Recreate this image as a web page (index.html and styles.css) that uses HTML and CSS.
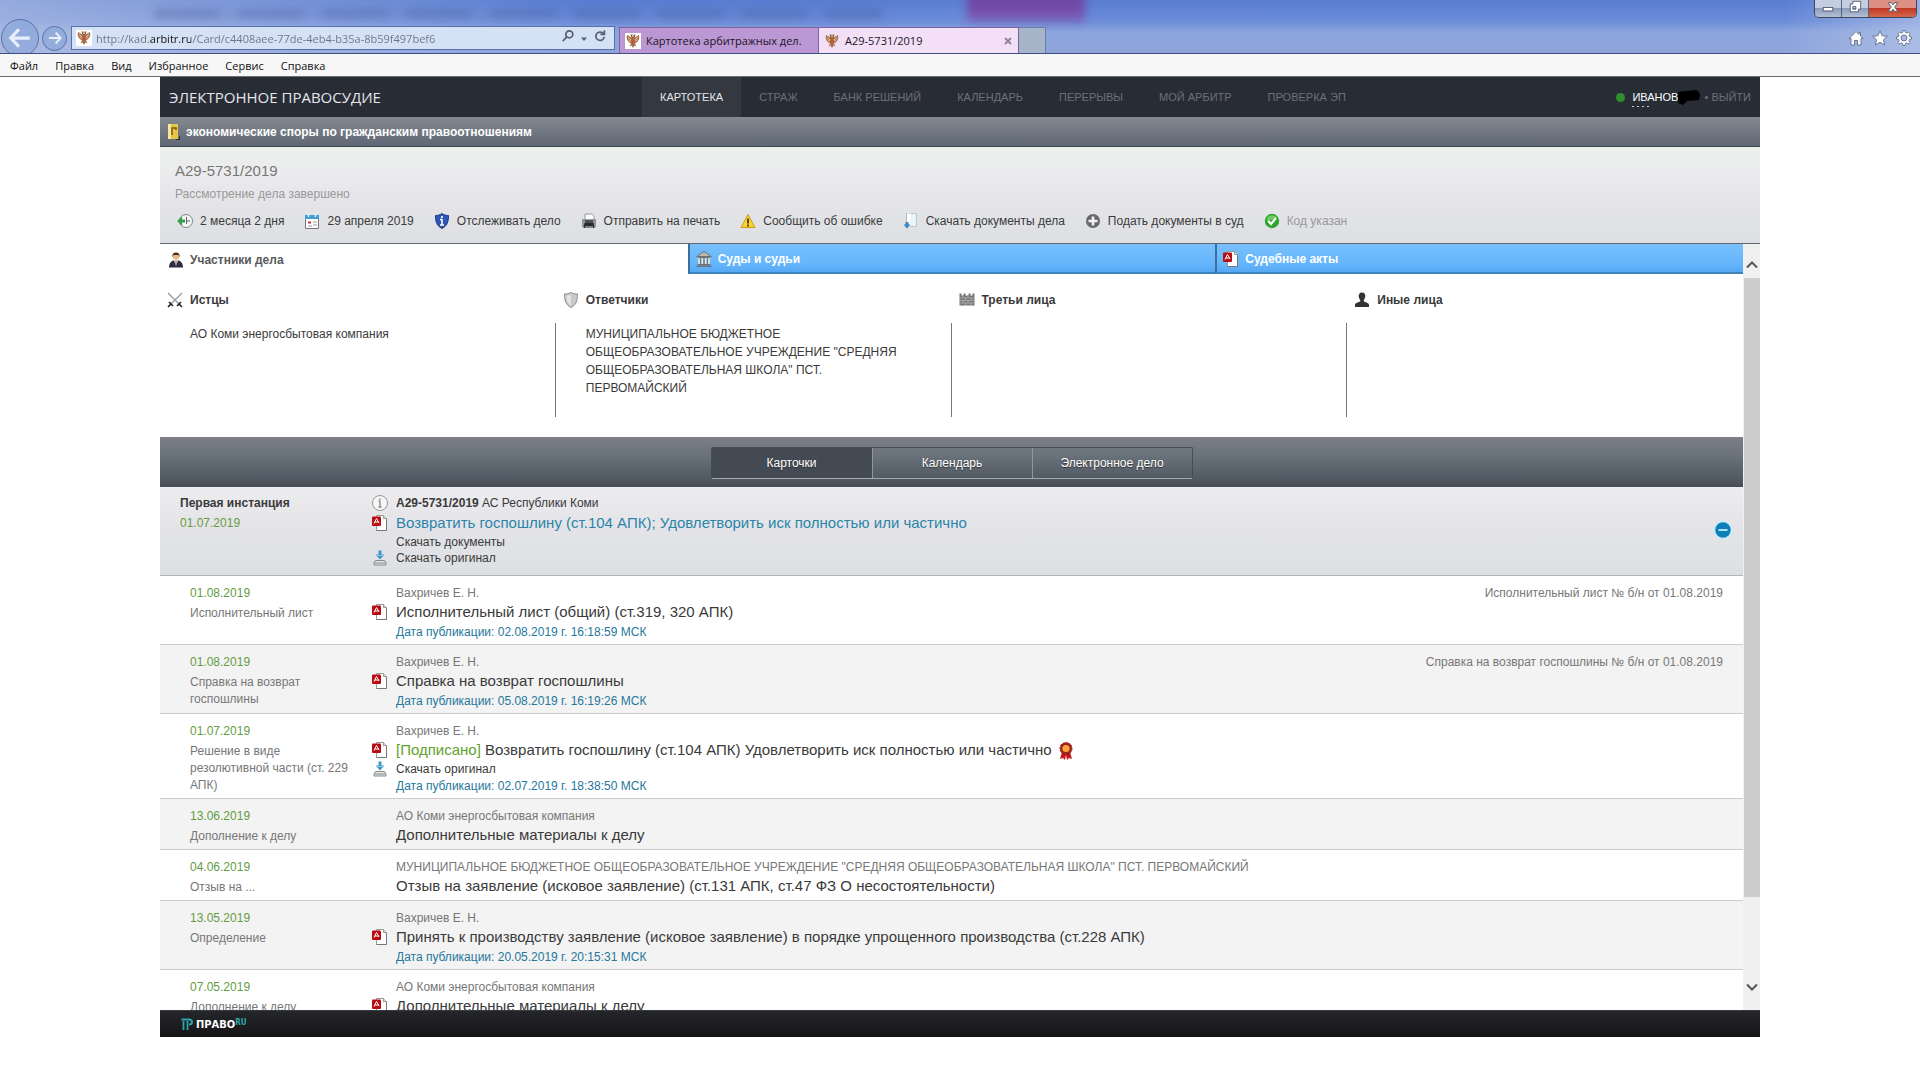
FILE: index.html
```html
<!DOCTYPE html>
<html lang="ru">
<head>
    <meta charset="UTF-8">
    <meta name="viewport" content="width=device-width, initial-scale=1.0">
    <title>А29-5731/2019</title>
    <link rel="stylesheet" href="styles.css">
</head>
<body>
    <!-- Иконки -->
    <svg class="sprite" aria-hidden="true">
        <symbol id="eagle" viewBox="0 0 16 16">
            <path d="M8 5C6 5 5 3.500 2 2 1.200 5 2 8 4.500 9.500L6 10.500 4.500 13.500 6.500 12.500 8 15 9.500 12.500 11.500 13.500 10 10.500 11.500 9.500C14 8 14.800 5 14 2 11 3.500 10 5 8 5z" fill="#a8704a"/>
            <path d="M5.500 1.500h2v2.500h1V1.500h2l-1 3.500h-3z" fill="#8f5836"/>
            <path d="M3 4l3 3M13 4l-3 3M3.500 6.500L6 8.500M12.500 6.500L10 8.500" stroke="#f2dcb8" stroke-width=".8"/>
            <path d="M6.700 6.500h2.600v3L8 10.700 6.700 9.500z" fill="#c0563c"/>
        </symbol>
        <symbol id="pdf" viewBox="0 0 16 16">
            <path d="M4.500 .5h7l3 3v12h-10z" fill="#fff" stroke="#999"/>
            <path d="M11.500 .5v3h3" fill="#ddd" stroke="#999"/>
            <path d="M4.500 15.500h10V4" fill="none" stroke="#777"/>
            <rect x="0" y="1.500" width="9" height="9.500" rx="1" fill="#b80d14"/>
            <path d="M2 8.500L4.500 3.500 7 8M3 7h4" fill="none" stroke="#fff"/>
        </symbol>
        <symbol id="save" viewBox="0 0 16 16">
            <path d="M6.500 .5h3v4H12.500L8 9.500 3.500 4.500h3z" fill="#3f97c4"/>
            <path d="M4.500 5.500h7" stroke="#8cc8e6"/>
            <path d="M3.500 10.500h9l1.500 2.500v2H2v-2z" fill="#e4e7e9" stroke="#85898d"/>
            <path d="M3 13h10" stroke="#85898d"/>
        </symbol>
    </svg>

    <div class="browser">
        <div class="blur-title"></div>
        <div class="blur-purple"></div>
        <div class="toolbar">
            <button class="nav-btn back" aria-label="Назад"><svg viewBox="0 0 24 24"><path d="M11 4L3.500 12l7.500 8M4 12h17" /></svg></button>
            <button class="nav-btn forward" aria-label="Вперёд"><svg viewBox="0 0 24 24"><path d="M13 4l7.500 8-7.500 8M20 12H3" /></svg></button>
            <div class="address">
                <svg class="fav"><use href="#eagle"/></svg>
                <input class="url" type="text" aria-label="Адрес" value="http://kad.arbitr.ru/Card/c4408aee-77de-4eb4-b35a-8b59f497bef6">
                <button class="tool" aria-label="Поиск"><svg viewBox="0 0 16 16"><circle cx="9.500" cy="6" r="4"/><path d="M6.500 9L2 14"/></svg></button>
                <button class="tool small" aria-label="Список"><svg viewBox="0 0 8 8"><path d="M1 2.500h6L4 6z" fill="#555f73" stroke="none"/></svg></button>
                <button class="tool" aria-label="Обновить"><svg viewBox="0 0 16 16"><path d="M12 5.500A4.800 4.800 0 1 0 12.800 9"/><path d="M13 1.500v4.500H8.500"/></svg></button>
            </div>
            <div class="browser-tabs">
                <button class="browser-tab"><svg class="fav"><use href="#eagle"/></svg>Картотека арбитражных дел.</button>
                <button class="browser-tab current"><svg class="fav"><use href="#eagle"/></svg>А29-5731/2019<span class="close-tab"><svg viewBox="0 0 8 8"><path d="M1 1l6 6M7 1L1 7"/></svg></span></button>
                <button class="new-tab" aria-label="Новая вкладка"></button>
            </div>
            <div class="corner">
                <button aria-label="Домой"><svg viewBox="0 0 16 16"><path d="M8 1.500L1 8.500h2V15h3.500v-4.500h3V15H13V8.500h2L12.500 6V2.500H11v2z"/></svg></button>
                <button aria-label="Избранное"><svg viewBox="0 0 16 16"><path d="M8 .8l2.100 5 5.400.4-4.100 3.500 1.300 5.300L8 12.200 3.300 15l1.300-5.300L.5 6.200l5.400-.4z"/></svg></button>
                <button aria-label="Параметры"><svg viewBox="0 0 16 16"><path fill-rule="evenodd" d="M7 .5h2l.4 2 1.300.5L12.500 2 14 3.500l-1.100 1.800.5 1.300 2.100.4v2l-2.100.4-.5 1.300 1.100 1.800-1.500 1.500-1.800-1.100-1.300.5-.4 2.100H7l-.4-2.100-1.300-.5L3.500 14 2 12.500l1.100-1.800-.5-1.300L.5 9V7l2.100-.4.500-1.300L2 3.500 3.500 2l1.800 1.100 1.300-.5zM8 5a3 3 0 1 0 0 6 3 3 0 0 0 0-6z"/></svg></button>
            </div>
        </div>
        <div class="window-buttons">
            <button aria-label="Свернуть"><svg viewBox="0 0 16 16"><rect x="2.500" y="8.500" width="11" height="4"/></svg></button>
            <button aria-label="Развернуть"><svg viewBox="0 0 16 16"><path fill-rule="evenodd" d="M5.500 1.500h9v9h-2.500v3H2.500V4.500h3zM5.500 7.500h3.500v3H5.500z"/></svg></button>
            <button class="win-close" aria-label="Закрыть"><svg viewBox="0 0 16 16"><path d="M2.500 3h3.500l2 2.500L10 3h3.500L10 8l3.500 5H10l-2-2.500L6 13H2.500L6 8z"/></svg></button>
        </div>
    </div>
    <nav class="menu">
        <button>Файл</button>
        <button>Правка</button>
        <button>Вид</button>
        <button>Избранное</button>
        <button>Сервис</button>
        <button>Справка</button>
    </nav>

    <div class="page">
        <header class="header">
            <a class="logo" href="#">ЭЛЕКТРОННОЕ ПРАВОСУДИЕ</a>
            <nav class="main-nav">
                <a class="active" href="#">КАРТОТЕКА</a>
                <a href="#">СТРАЖ</a>
                <a href="#">БАНК РЕШЕНИЙ</a>
                <a href="#">КАЛЕНДАРЬ</a>
                <a href="#">ПЕРЕРЫВЫ</a>
                <a href="#">МОЙ АРБИТР</a>
                <a href="#">ПРОВЕРКА ЭП</a>
            </nav>
            <div class="user">
                <span class="online"></span>
                <a class="user-name" href="#">ИВАНОВ</a>
                <svg class="marker" viewBox="0 0 22 18"><path d="M0 4L8 3 18 2q4 1 4 6l-1 4-12 1-4 4-5-2z"/></svg>
                <span class="exit">• <a href="#">ВЫЙТИ</a></span>
            </div>
        </header>
        <div class="category">
            <svg viewBox="0 0 14 18"><rect x="1" y="1" width="10" height="15" fill="#e6c64a"/><rect x="1" y="1" width="3" height="15" fill="#f6e79c"/><path d="M5 12V5h4v2" fill="none" stroke="#7c5a12" stroke-width="1.500"/><path d="M12.500 13v3.500H9" fill="none" stroke="#2b2b2b"/></svg>
            экономические споры по гражданским правоотношениям
        </div>
        <section class="case">
            <h1>А29-5731/2019</h1>
            <p class="status">Рассмотрение дела завершено</p>
            <ul class="actions">
                <li><svg viewBox="0 0 16 16"><circle cx="9" cy="8" r="6.500" fill="#f3f5f3" stroke="#7f8583"/><path d="M9.500 4v4h3.500M9.500 8v3" fill="none" stroke="#666"/><path d="M0 8L5 3.500V6.500h3v3H5v3z" fill="#37a04c"/></svg>2 месяца 2 дня</li>
                <li><svg viewBox="0 0 16 16"><path d="M1.500 3.500h13v12h-13z" fill="#fff" stroke="#777"/><path d="M1 2h14v4H1z" fill="#3f9fd0"/><path d="M4.500 0v4M11.500 0v4" stroke="#dff1fb" stroke-width="1.500"/><path d="M4 8.500h3v2H4z" fill="#c0392b"/><path d="M9 9h4M4 13h4M9 12h4" stroke="#999"/></svg>29 апреля 2019</li>
                <li><a href="#"><svg viewBox="0 0 16 16"><path d="M8 .5C10 2 12 2.500 14.500 2.500 14.500 9 13 13 8 15.500 3 13 1.500 9 1.500 2.500 4 2.500 6 2 8 .5z" fill="#2e56b4" stroke="#1b3a86"/><path d="M8 3v2M8 6.500V12M6 6.500h2.500M6 12h4" stroke="#fff" stroke-width="1.600"/></svg>Отслеживать дело</a></li>
                <li><a href="#"><svg viewBox="0 0 16 16"><path d="M4 7V1h7l2 2v4" fill="#fafafa" stroke="#999"/><path d="M1 6.500h14v6H1z" fill="#4b4f54"/><path d="M1 6h3v8H1zM12 6h3v8h-3z" fill="#8f949a"/><path d="M3.500 10h9l1 5h-11z" fill="#26292d"/><path d="M4 14h8" stroke="#ddd"/></svg>Отправить на печать</a></li>
                <li><a href="#"><svg viewBox="0 0 16 16"><path d="M8 1.500l7 13H1z" fill="#fbd334" stroke="#cf9a12" stroke-linejoin="round"/><path d="M8 5.500v5M8 11.500v2" stroke="#3a2d05" stroke-width="1.700"/></svg>Сообщить об ошибке</a></li>
                <li><a href="#"><svg viewBox="0 0 16 16"><path d="M3.500 .5h10v13h-10z" fill="#e9f3f9" stroke="#b6c6d0"/><path d="M3.500 .5h4v13h-4z" fill="#fff"/><path d="M3.500 .5v10" stroke="#a5b6c2"/><path d="M2.500 9h3v2.500H7.500L4 15.500 .5 11.500h2z" fill="#3d87c0"/></svg>Скачать документы дела</a></li>
                <li><a href="#"><svg viewBox="0 0 16 16"><circle cx="8" cy="8" r="7" fill="#67696c"/><path d="M8 3.500v9M3.500 8h9" stroke="#f2f2f2" stroke-width="2.600"/></svg>Подать документы в суд</a></li>
                <li class="done"><svg viewBox="0 0 16 16"><circle cx="8" cy="8" r="7.200" fill="#2ba52f"/><path d="M3 5a6 6 0 0 1 10 0q-5 1-10 4z" fill="#6ecb62"/><path d="M4.300 8l2.700 3 5-6" fill="none" stroke="#fff" stroke-width="2.200"/></svg>Код указан</li>
            </ul>
        </section>

        <div class="viewport">
            <main class="content">
                <div class="tabs">
                    <button class="tab selected"><svg viewBox="0 0 16 16"><circle cx="8" cy="4.500" r="3.200" fill="#e9b98a"/><path d="M4.500 5C4 1.500 6 .5 8 .5s4 1 3.500 4.500L10.500 3h-5z" fill="#4a2c17"/><path d="M1 15.500c0-4 2-6.500 4.500-7h5c2.500.5 4.500 3 4.500 7z" fill="#27303d"/><path d="M6 8.500h4L8 14z" fill="#fff"/><path d="M8 9v4" stroke="#b33"/></svg>Участники дела</button>
                    <button class="tab"><svg viewBox="0 0 16 16"><path d="M8 .5l7.500 5H.5z" fill="#b9b9ae" stroke="#6f7378"/><path d="M2 6.500h12M1.500 13.500h13M.5 15.200h15" stroke="#6f7378" stroke-width="1.500"/><path d="M3 7v6M6.300 7v6M9.700 7v6M13 7v6" stroke="#e5e2d6" stroke-width="1.800"/><path d="M4.500 7v6M8 7v6M11.500 7v6" stroke="#6f7378"/></svg>Суды и судьи</button>
                    <button class="tab"><svg><use href="#pdf"/></svg>Судебные акты</button>
                </div>
                <div class="parties">
                    <div class="party">
                        <h2><svg viewBox="0 0 16 16"><path d="M1 1l12 12M15 1L3 13" stroke="#9a9a9a" stroke-width="1.400"/><path d="M10 14l4-4M12.500 12.500L15 15M6 14l-4-4M3.500 12.500L1 15" stroke="#222" stroke-width="1.600"/></svg>Истцы</h2>
                        <div class="names">АО Коми энергосбытовая компания</div>
                    </div>
                    <div class="party">
                        <h2><svg viewBox="0 0 16 16"><path d="M8 .5c2 1 4.500 1.500 6.500 1.500 0 7-1.500 11-6.500 13.500C3 13 1.500 9 1.500 2 3.500 2 6 1.500 8 .5z" fill="#c6c8ca" stroke="#8f9294"/><path d="M8 2.500v11C4.500 11.500 3.500 8 3.500 3.500 5 3.500 6.500 3.300 8 2.500z" fill="#e2e3e4"/></svg>Ответчики</h2>
                        <div class="names">МУНИЦИПАЛЬНОЕ БЮДЖЕТНОЕ ОБЩЕОБРАЗОВАТЕЛЬНОЕ УЧРЕЖДЕНИЕ "СРЕДНЯЯ ОБЩЕОБРАЗОВАТЕЛЬНАЯ ШКОЛА" ПСТ. ПЕРВОМАЙСКИЙ</div>
                    </div>
                    <div class="party">
                        <h2><svg viewBox="0 0 16 16"><path d="M.5 1.500h2v2h2v-2h2v2h3v-2h2v2h2v-2h2v12H.5z" fill="#777"/><path d="M1 6h14M1 8.500h14M1 11h14M4 4v2M9 4v2M6.500 6v2.500M12 6v2.500M4 8.500V11M9 8.500V11M6.500 11v2.500M12 11v2.500" stroke="#bbb" stroke-width=".7"/></svg>Третьи лица</h2>
                        <div class="names"></div>
                    </div>
                    <div class="party">
                        <h2><svg viewBox="0 0 16 16"><path d="M8 .5c2.500 0 3.500 1.800 3.300 4C11 6.500 10.200 7.500 9.800 8v1.500c2.500 1 5.200 1.500 5.200 3.500v2H1v-2c0-2 2.700-2.500 5.200-3.500V8C5.800 7.500 5 6.500 4.700 4.500 4.500 2.300 5.500.5 8 .5z" fill="#333"/></svg>Иные лица</h2>
                        <div class="names"></div>
                    </div>
                </div>
                <div class="switch-bar">
                    <div class="switch">
                        <button class="on">Карточки</button>
                        <button>Календарь</button>
                        <button>Электронное дело</button>
                    </div>
                </div>
                <div class="instance">
                    <div class="info">
                        <h3>Первая инстанция</h3>
                        <div class="date">01.07.2019</div>
                    </div>
                    <div class="lines">
                        <div class="line court"><svg viewBox="0 0 16 16"><circle cx="8" cy="8" r="7.500" fill="#f6f6f6" stroke="#999"/><path d="M8 3.500v2M8 6.500V12M6.500 6.500H8M6.500 12h3" stroke="#888" stroke-width="1.300"/></svg><span><b>А29-5731/2019</b> АС Республики Коми</span></div>
                        <div class="line title"><svg><use href="#pdf"/></svg><a class="result" href="#">Возвратить госпошлину (ст.104 АПК); Удовлетворить иск полностью или частично</a></div>
                        <div class="line"><a href="#">Скачать документы</a></div>
                        <div class="line"><svg><use href="#save"/></svg><a href="#">Скачать оригинал</a></div>
                    </div>
                    <button class="collapse" aria-label="Свернуть"><svg viewBox="0 0 22 22"><circle cx="11" cy="11" r="10.500" fill="#c8ecfa"/><circle cx="11" cy="11" r="8.500" fill="#0f7fb8"/><path d="M6 11h10" stroke="#c4ecff" stroke-width="2"/></svg></button>
                </div>
                <div class="row">
                    <div class="info"><div class="date">01.08.2019</div><div class="type">Исполнительный лист</div></div>
                    <div class="lines">
                        <div class="line who"><span>Вахричев Е. Н.</span></div>
                        <div class="line title"><svg><use href="#pdf"/></svg><a href="#">Исполнительный лист (общий) (ст.319, 320 АПК)</a></div>
                        <div class="line published"><span>Дата публикации: 02.08.2019 г. 16:18:59 МСК</span></div>
                    </div>
                    <div class="extra">Исполнительный лист № б/н от 01.08.2019</div>
                </div>
                <div class="row">
                    <div class="info"><div class="date">01.08.2019</div><div class="type">Справка на возврат госпошлины</div></div>
                    <div class="lines">
                        <div class="line who"><span>Вахричев Е. Н.</span></div>
                        <div class="line title"><svg><use href="#pdf"/></svg><a href="#">Справка на возврат госпошлины</a></div>
                        <div class="line published"><span>Дата публикации: 05.08.2019 г. 16:19:26 МСК</span></div>
                    </div>
                    <div class="extra">Справка на возврат госпошлины № б/н от 01.08.2019</div>
                </div>
                <div class="row">
                    <div class="info"><div class="date">01.07.2019</div><div class="type">Решение в виде резолютивной части (ст. 229 АПК)</div></div>
                    <div class="lines">
                        <div class="line who"><span>Вахричев Е. Н.</span></div>
                        <div class="line title"><svg><use href="#pdf"/></svg><a href="#"><span class="signed">[Подписано]</span> Возвратить госпошлину (ст.104 АПК) Удовлетворить иск полностью или частично <svg class="seal" viewBox="0 0 16 18"><path d="M4 10L2 17l3-1 2 2 1-5 1 5 2-2 3 1-2-7z" fill="#c4161c"/><circle cx="8" cy="6.500" r="6" fill="#a3231a"/><circle cx="8" cy="6.500" r="6" fill="none" stroke="#8d1712" stroke-dasharray="2 1"/><circle cx="8" cy="6.500" r="3.600" fill="#f9a63a"/></svg></a></div>
                        <div class="line"><svg><use href="#save"/></svg><a href="#">Скачать оригинал</a></div>
                        <div class="line published"><span>Дата публикации: 02.07.2019 г. 18:38:50 МСК</span></div>
                    </div>
                </div>
                <div class="row">
                    <div class="info"><div class="date">13.06.2019</div><div class="type">Дополнение к делу</div></div>
                    <div class="lines">
                        <div class="line who"><span>АО Коми энергосбытовая компания</span></div>
                        <div class="line title"><span>Дополнительные материалы к делу</span></div>
                    </div>
                </div>
                <div class="row">
                    <div class="info"><div class="date">04.06.2019</div><div class="type">Отзыв на ...</div></div>
                    <div class="lines">
                        <div class="line who"><span>МУНИЦИПАЛЬНОЕ БЮДЖЕТНОЕ ОБЩЕОБРАЗОВАТЕЛЬНОЕ УЧРЕЖДЕНИЕ "СРЕДНЯЯ ОБЩЕОБРАЗОВАТЕЛЬНАЯ ШКОЛА" ПСТ. ПЕРВОМАЙСКИЙ</span></div>
                        <div class="line title"><span>Отзыв на заявление (исковое заявление) (ст.131 АПК, ст.47 ФЗ О несостоятельности)</span></div>
                    </div>
                </div>
                <div class="row">
                    <div class="info"><div class="date">13.05.2019</div><div class="type">Определение</div></div>
                    <div class="lines">
                        <div class="line who"><span>Вахричев Е. Н.</span></div>
                        <div class="line title"><svg><use href="#pdf"/></svg><a href="#">Принять к производству заявление (исковое заявление) в порядке упрощенного производства (ст.228 АПК)</a></div>
                        <div class="line published"><span>Дата публикации: 20.05.2019 г. 20:15:31 МСК</span></div>
                    </div>
                </div>
                <div class="row">
                    <div class="info"><div class="date">07.05.2019</div><div class="type">Дополнение к делу</div></div>
                    <div class="lines">
                        <div class="line who"><span>АО Коми энергосбытовая компания</span></div>
                        <div class="line title"><svg><use href="#pdf"/></svg><a href="#">Дополнительные материалы к делу</a></div>
                    </div>
                </div>
            </main>
            <div class="scrollbar">
                <button class="scroll-up" aria-label="Вверх"><svg viewBox="0 0 12 9"><path d="M1 7.500l5-5 5 5"/></svg></button>
                <div class="track"><div class="thumb"></div></div>
                <button class="scroll-down" aria-label="Вниз"><svg viewBox="0 0 12 9"><path d="M1 1.500l5 5 5-5"/></svg></button>
            </div>
        </div>

        <footer class="footer">
            <a href="#"><svg viewBox="0 0 12 12"><path d="M.5 1.500h7.500q3 0 3 2.500T8 6.500" fill="none" stroke="#2ba6ad" stroke-width="2"/><path d="M2.500 3v9M6.500 3v9" stroke="#2ba6ad" stroke-width="1.800"/></svg><span>ПРАВО</span><sup>RU</sup></a>
        </footer>
    </div>
</body>
</html>
```
FILE: styles.css
```css
* {
    margin: 0;
    padding: 0;
    box-sizing: border-box;
}

body {
    display: flex;
    flex-direction: column;
    height: 100vh;
    overflow: hidden;
    background: #fff;
    color: #3a3a3a;
    font-family: "Liberation Sans", Arial, sans-serif;
    font-size: 12px;
}

button {
    border: none;
    background: none;
    font-family: inherit;
    font-size: 12px;
    color: inherit;
    cursor: pointer;
}

a {
    color: inherit;
    text-decoration: none;
}

ul {
    list-style: none;
}

svg {
    flex: none;
    width: 16px;
    height: 16px;
}

.sprite {
    position: absolute;
    width: 0;
    height: 0;
}

/* Окно браузера */
.browser {
    position: relative;
    flex: none;
    height: 54px;
    padding-top: 19px;
    overflow: hidden;
    background: linear-gradient(90deg, rgba(190, 200, 228, 0.6), rgba(190, 200, 228, 0) 30%, rgba(190, 200, 228, 0) 93%, rgba(190, 205, 235, 0.6)), linear-gradient(#587dd2, #6c8cd8 40%, #8ba4dc 60%, #8fa4db);
    border-bottom: 1px solid #3f4f86;
    font-family: "Open Sans", sans-serif;
}

.blur-title,
.blur-purple {
    position: absolute;
    filter: blur(4px);
}

.blur-title {
    top: 9px;
    left: 8%;
    width: 38%;
    height: 9px;
    background: repeating-linear-gradient(90deg, rgba(60, 82, 150, 0.35) 0 60px, rgba(60, 82, 150, 0.1) 70px 84px);
}

.blur-purple {
    top: -8px;
    left: 967px;
    width: 118px;
    height: 30px;
    background: linear-gradient(#7147a6 50%, #8068bd);
}

.toolbar {
    position: relative;
    display: flex;
    align-items: center;
    height: 34px;
    padding: 4px 0 0 1px;
}

.nav-btn {
    flex: none;
    display: flex;
    align-items: center;
    justify-content: center;
    border: 1px solid #5872ac;
    border-radius: 50%;
    background: rgba(140, 166, 218, 0.7);
}

.nav-btn path {
    fill: none;
    stroke: #e8effc;
    stroke-width: 3;
}

.back {
    width: 38px;
    height: 38px;
}

.back svg {
    width: 26px;
    height: 26px;
}

.forward {
    width: 25px;
    height: 25px;
    margin: 0 4px 0 3px;
}

.address {
    flex: none;
    display: flex;
    align-items: center;
    width: 544px;
    height: 24px;
    padding: 0 4px;
    border: 1px solid #5471ad;
    background: #d5e2f6;
}

.fav {
    width: 16px;
    height: 16px;
    background: #fff;
}

.url {
    flex: 1;
    min-width: 0;
    margin-left: 4px;
    border: none;
    outline: none;
    /* домен темнее остального адреса */
    background: linear-gradient(90deg, #6b7484 53px, #111 53px 95px, #6b7484 95px);
    background-clip: text;
    -webkit-background-clip: text;
    color: transparent;
    font-family: inherit;
    font-size: 11px;
}

.tool {
    width: 20px;
    height: 18px;
}

.tool.small {
    width: 12px;
}

.tool svg {
    width: 14px;
    height: 14px;
    fill: none;
    stroke: #555f73;
    stroke-width: 2;
}

.tool.small svg {
    width: 8px;
    height: 8px;
}

.browser-tabs {
    display: flex;
    align-self: flex-end;
    margin-left: 4px;
}

.browser-tab {
    display: flex;
    align-items: center;
    gap: 5px;
    width: 200px;
    height: 26px;
    padding: 0 6px 0 5px;
    border: 1px solid #7a62a5;
    border-bottom: none;
    background: #bb98d3;
    color: #1c1428;
    font-size: 11px;
    white-space: nowrap;
}

.browser-tab.current {
    border-left: none;
    background: #f3e0f7;
}

.browser-tab.current .fav {
    background: none;
}

.close-tab {
    margin-left: auto;
}

.close-tab svg {
    width: 8px;
    height: 8px;
    stroke: #94839c;
    stroke-width: 2;
}

.new-tab {
    width: 27px;
    border: 1px solid #6c7fa8;
    border-left: none;
    border-bottom: none;
    background: #a7b5cb;
}

.corner {
    display: flex;
    gap: 8px;
    margin-left: auto;
    padding-right: 8px;
}

.corner svg {
    display: block;
    fill: #fff;
    stroke: #6b7690;
}

.window-buttons {
    position: absolute;
    top: 0;
    right: 3px;
    display: flex;
    border: 1px solid #3c4760;
    border-top: none;
    border-radius: 0 0 5px 5px;
    overflow: hidden;
}

.window-buttons button {
    width: 27px;
    height: 17px;
    border-right: 1px solid #55607a;
    background: linear-gradient(#c3cfe0 45%, #8b9bb8 50%, #b3c1d8);
}

.window-buttons .win-close {
    width: 47px;
    border-right: none;
    background: linear-gradient(#dd9083 45%, #c23a25 50%, #d4674c);
}

.window-buttons svg {
    width: 14px;
    height: 14px;
    fill: #fff;
    stroke: #4a536a;
}

.menu {
    flex: none;
    display: flex;
    gap: 17px;
    height: 23px;
    padding-left: 10px;
    background: #f7f7f7;
    border-bottom: 1px solid #6d6d6d;
    font-family: "Open Sans", sans-serif;
    color: #111;
}

.menu button {
    font-size: 11px;
}

/* Страница */
.page {
    flex: 1;
    display: flex;
    flex-direction: column;
    width: 100%;
    max-width: 1600px;
    min-height: 0;
    margin: 0 auto 43px;
}

.header {
    flex: none;
    display: grid;
    grid-template-columns: minmax(220px, 473px) auto 1fr;
    height: 40px;
    padding: 0 9px;
    background: #282c35;
    color: #6c7078;
    font-size: 11px;
    line-height: 40px;
}

.logo {
    color: #e4e6ea;
    font-family: "Open Sans", sans-serif;
    font-size: 15px;
}

.main-nav {
    display: flex;
}

.main-nav a {
    padding: 0 18px;
}

.main-nav .active {
    background: #343840;
    color: #e4e6e8;
}

.user {
    display: flex;
    align-items: center;
    justify-content: flex-end;
}

.online {
    width: 9px;
    height: 9px;
    margin-right: 7px;
    border-radius: 50%;
    background: #2f8f2f;
}

.user-name {
    height: 20px;
    background: repeating-linear-gradient(90deg, #ccc 0 2px, transparent 2px 5px) left bottom / 19px 1px no-repeat;
    line-height: 20px;
    color: #fff;
}

.marker {
    width: 22px;
    height: 18px;
}

.exit {
    margin-left: 4px;
}

.category {
    flex: none;
    display: flex;
    align-items: center;
    gap: 5px;
    height: 30px;
    padding-left: 7px;
    background: linear-gradient(#82898f, #606775);
    border-bottom: 1px solid #3e4356;
    color: #fff;
    font-weight: bold;
}

.category svg {
    width: 14px;
    height: 18px;
}

.case {
    flex: none;
    height: 97px;
    padding: 13px 15px 0;
    background: linear-gradient(#eaf0ea, #ececee 25%, #e5e5e9 55%, #dddfe3);
    border-bottom: 1px solid #5f6773;
}

.case h1 {
    color: #777;
    font-size: 15px;
    font-weight: normal;
    line-height: 22px;
}

.status {
    color: #999;
    line-height: 24px;
}

.actions {
    display: flex;
    gap: 20px;
    padding: 5px 2px 0;
    line-height: 20px;
}

.actions li,
.actions a {
    display: flex;
    align-items: center;
    gap: 7px;
    white-space: nowrap;
}

.actions .done {
    color: #999;
}

.viewport {
    flex: 1;
    display: flex;
    min-height: 0;
}

.content {
    flex: 1;
    min-width: 0;
    overflow: hidden;
}

.tabs {
    display: grid;
    grid-template-columns: repeat(3, 1fr);
}

.tab {
    display: flex;
    align-items: center;
    gap: 6px;
    height: 30px;
    padding: 2px 0 0 6px;
    border-left: 2px solid #3d6f9c;
    border-bottom: 2px solid #3f83bd;
    background: linear-gradient(#79c0fb, #64b6fd 70%, #55a8f2);
    color: #fff;
    font-weight: bold;
}

.tab.selected {
    padding-left: 8px;
    border: none;
    background: #fff;
    color: #5a5a5a;
}

.parties {
    display: grid;
    grid-template-columns: repeat(4, 1fr);
    height: 163px;
    padding: 16px 0 20px;
}

.party {
    display: flex;
    flex-direction: column;
    gap: 13px;
}

.party h2 {
    display: flex;
    align-items: center;
    gap: 7px;
    padding-left: 7px;
    font-size: 12px;
    line-height: 20px;
}

.names {
    flex: 1;
    padding: 2px 50px 0 30px;
    border-right: 1px solid #777;
    line-height: 18px;
}

.party:last-child .names {
    border-right: none;
}

.switch-bar {
    display: flex;
    justify-content: center;
    height: 50px;
    padding: 10px 0 8px;
    background: linear-gradient(#7d7f8a, #6a727b 35%, #535b65 80%, #474d58);
}

.switch {
    display: flex;
    border: 1px solid #454d56;
    border-bottom-color: #a3aab0;
    border-radius: 2px;
}

.switch button {
    width: 160px;
    border-left: 1px solid #8f979e;
    color: #fff;
    text-shadow: 0 1px 1px #333;
}

.switch .on {
    border-left: none;
    background: #444a53;
}

.instance,
.row {
    display: flex;
    border-bottom: 1px solid #ccc;
}

.instance {
    padding: 7px 10px 9px 20px;
    background: linear-gradient(#ededf0, #e4e4e8 45%, #dde0e3);
    border-bottom-color: #b4b4be;
}

.row {
    padding: 9px 20px 3px 30px;
}

.row:nth-child(even) {
    background: #fff;
}

.instance ~ .row:nth-child(odd) {
    background: #fff;
}

.instance ~ .row:nth-child(even) {
    background: #f3f3f3;
}

.info {
    flex: none;
    width: 182px;
    padding-right: 12px;
    line-height: 16px;
}

.instance .info {
    width: 192px;
}

.instance h3 {
    font-size: 12px;
    line-height: 18px;
}

.date {
    color: #649c3f;
}

.instance .date {
    line-height: 22px;
}

.type {
    margin-top: 4px;
    color: #777;
    line-height: 17px;
}

.lines {
    flex: 1;
    min-width: 0;
}

.line {
    display: grid;
    grid-template-columns: 16px 1fr;
    column-gap: 8px;
    align-items: center;
    line-height: 16px;
}

.line > a,
.line > span {
    grid-column: 2;
}

.line > svg {
    margin: -2px 0;
}

.court {
    line-height: 18px;
}

.title {
    font-size: 15px;
    line-height: 22px;
}

.who,
.extra {
    color: #777;
    line-height: 16px;
}

.published {
    color: #25779c;
    line-height: 18px;
}

.result {
    color: #2b84a8;
}

.signed {
    color: #5fa32c;
}

.seal {
    width: 16px;
    height: 18px;
    margin-left: 2px;
    vertical-align: middle;
}

.collapse {
    align-self: center;
    height: 22px;
}

.collapse svg {
    display: block;
    width: 20px;
    height: 20px;
}

.scrollbar {
    display: flex;
    flex-direction: column;
    width: 17px;
    background: #f0f0f0;
}

.scrollbar svg {
    width: 12px;
    height: 9px;
    fill: none;
    stroke: #555;
    stroke-width: 2;
}

.scroll-up {
    height: 34px;
    padding-top: 8px;
}

.scroll-down {
    height: 44px;
}

.track {
    flex: 1;
}

.thumb {
    height: 90%;
    margin-left: 1px;
    background: #cdcdcd;
}

.footer {
    flex: none;
    display: flex;
    align-items: center;
    height: 27px;
    padding-left: 21px;
    border-top: 1px solid #3a3b40;
    background: linear-gradient(#252629, #151518);
    color: #fff;
}

.footer a {
    display: flex;
    align-items: center;
    font-family: "Liberation Sans Narrow", "DejaVu Sans Condensed", sans-serif;
    font-size: 11px;
    font-weight: bold;
}

.footer svg {
    width: 12px;
    height: 12px;
    margin-right: 3px;
}

.footer sup {
    align-self: flex-start;
    color: #2ba6ad;
    font-size: 8px;
    line-height: 10px;
}
```
